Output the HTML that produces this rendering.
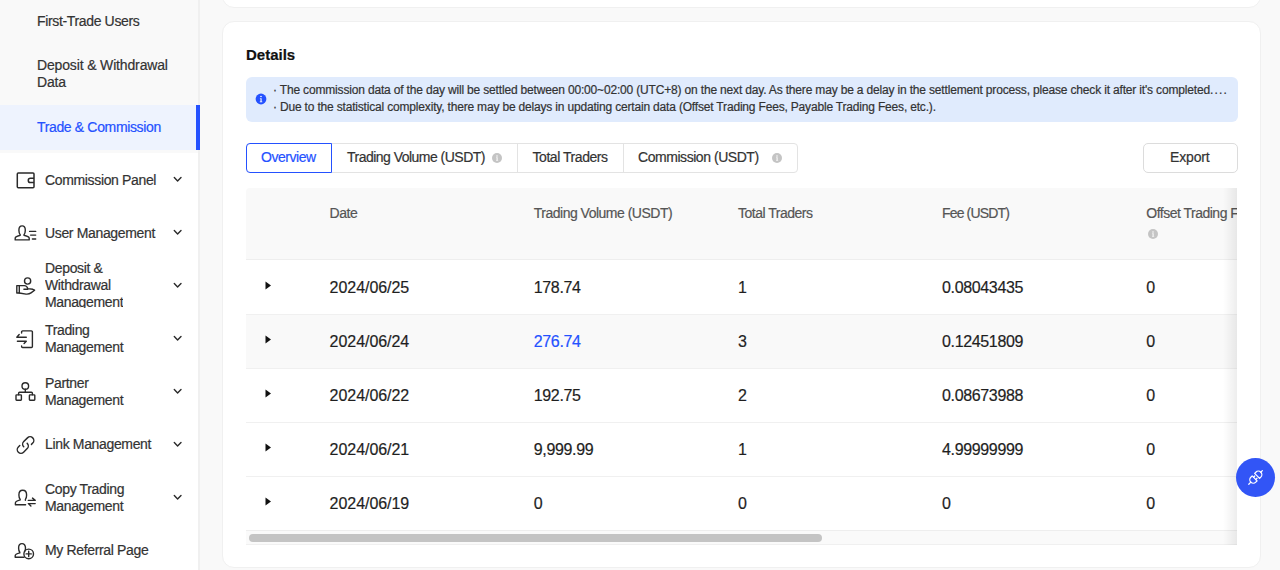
<!DOCTYPE html>
<html><head><meta charset="utf-8">
<style>
*{box-sizing:border-box;margin:0;padding:0}
html,body{width:1280px;height:570px;overflow:hidden;background:#f9f9f9;font-family:"Liberation Sans",sans-serif;color:#1f1f1f}
.abs{position:absolute}
.sb{position:absolute;left:0;top:0;width:200px;height:570px;background:#fff;border-right:2px solid #f0f0f0}
.sub{position:absolute;left:0;top:0;width:198px;height:153px;background:#f9f9f9}
.active{position:absolute;left:0;top:105px;width:196px;height:45px;background:#eef3fe}
.bar{position:absolute;left:196.2px;top:105px;width:3.6px;height:45px;background:#2451ff}
.st{position:absolute;left:37px;font-size:14px;line-height:17px;color:#333;letter-spacing:-0.35px;white-space:nowrap}
.mt{position:absolute;left:45px;font-size:14px;line-height:17px;color:#333;letter-spacing:-0.35px;white-space:nowrap}
.ico{position:absolute;left:10px;width:30px;height:30px}
.chev{position:absolute;left:168px;width:20px;height:20px}
.card{position:absolute;background:#fff;border:1px solid #f0f0f0;border-radius:12px}
.th{position:absolute;font-size:14px;line-height:17px;color:#555;letter-spacing:-0.5px;white-space:nowrap}
.td{position:absolute;font-size:16px;line-height:20px;color:#1f1f1f;letter-spacing:-0.35px;white-space:nowrap}
.tab{position:absolute;top:143px;height:30px;font-size:14px;line-height:28px;color:#333;letter-spacing:-0.45px;white-space:nowrap}
.info{display:inline-block;width:10px;height:10px}
body div{-webkit-text-stroke:0.2px currentColor}</style></head><body>

<!-- sidebar -->
<div class="sb">
  <div class="sub"></div>
  <div class="active"></div>
  <div class="bar"></div>
  <div class="st" style="top:12.6px">First-Trade Users</div>
  <div class="st" style="top:56.8px;letter-spacing:-0.15px">Deposit &amp; Withdrawal<br>Data</div>
  <div class="st" style="top:118.5px;color:#2451ff">Trade &amp; Commission</div>

  <div class="mt" style="top:171.6px">Commission Panel</div>
  <div class="mt" style="top:224.7px">User Management</div>
  <div class="mt" style="top:260.1px;height:48px;overflow:hidden">Deposit &amp;<br>Withdrawal<br>Management</div>
  <div class="mt" style="top:321.5px">Trading<br>Management</div>
  <div class="mt" style="top:374.5px">Partner<br>Management</div>
  <div class="mt" style="top:436.3px">Link Management</div>
  <div class="mt" style="top:480.9px">Copy Trading<br>Management</div>
  <div class="mt" style="top:541.9px">My Referral Page</div>

  <!-- icons -->
  <svg class="ico" style="top:165px" viewBox="0 0 30 30" fill="none" stroke="#2a2a2a" stroke-width="1.5" stroke-linejoin="round">
    <rect x="7.3" y="8.1" width="16.7" height="14.6" rx="1"/>
    <path d="M24 13.3H20.4A2.1 2.1 0 0 0 20.4 17.5H24"/>
  </svg>
  <svg class="ico" style="top:218px" viewBox="0 0 30 30" fill="none" stroke="#2a2a2a" stroke-width="1.4" stroke-linejoin="round" stroke-linecap="round">
    <path d="M10.2 16.6C9.3 15.6 8.9 14.2 8.9 12.3C8.9 9.5 10.2 7.9 12.1 7.9C14 7.9 15.3 9.5 15.3 12.3C15.3 14.2 14.9 15.6 14 16.6L14 17.3C16.5 17.9 19.2 18.3 19.2 20.2L19.2 21.9L5.2 21.9L5.2 20.2C5.2 18.3 7.7 17.9 10.2 17.3Z"/>
    <path d="M19.6 13.4H25.7M20.6 17.1H25.7M22.4 21H25.7"/>
  </svg>
  <svg class="ico" style="top:270px" viewBox="0 0 30 30" fill="none" stroke="#2a2a2a" stroke-width="1.4" stroke-linejoin="round" stroke-linecap="round">
    <circle cx="17.6" cy="11" r="3.1"/>
    <rect x="6.8" y="15.6" width="2.5" height="7.4"/>
    <path d="M9.3 15.6H14.3C15.9 15.6 17.3 16.8 17.8 18.6L22.8 19.3L24.6 20.2L21 22.9C19.8 23.8 18 24.3 16 24.1L9.3 23M13.9 19.3H17.8"/>
  </svg>
  <svg class="ico" style="top:323px" viewBox="0 0 30 30" fill="none" stroke="#2a2a2a" stroke-width="1.4" stroke-linejoin="round" stroke-linecap="round">
    <path d="M11.6 10V8.9A1 1 0 0 1 12.6 7.9H21.4A1 1 0 0 1 22.4 8.9V23.5A1 1 0 0 1 21.4 24.5H12.6A1 1 0 0 1 11.6 23.5V22.9"/>
    <path d="M16.3 14.2H6.8L9.2 11.5M7.4 18.3H16.3L14.1 20.6"/>
  </svg>
  <svg class="ico" style="top:376px" viewBox="0 0 30 30" fill="none" stroke="#2a2a2a" stroke-width="1.4" stroke-linejoin="round" stroke-linecap="round">
    <circle cx="15.3" cy="10" r="3.3"/>
    <path d="M15.3 13.3V16.3M8.6 18.8V17.3A1 1 0 0 1 9.6 16.3H21.4A1 1 0 0 1 22.4 17.3V18.8"/>
    <rect x="6" y="18.9" width="5.4" height="5.3" rx="0.6"/>
    <rect x="19.4" y="18.9" width="5.4" height="5.3" rx="0.6"/>
  </svg>
  <svg class="ico" style="top:430px" viewBox="0 0 30 30" fill="none" stroke="#2a2a2a" stroke-width="1.45" stroke-linecap="round">
    <g transform="rotate(-45 15.5 15.5)">
      <path d="M20.5 18.9H22.3A3.7 3.7 0 0 0 22.3 11.5H17A3.7 3.7 0 0 0 13.3 15.2"/>
      <path d="M11.4 11.5H9.4A3.7 3.7 0 0 0 9.4 18.9H14.5A3.7 3.7 0 0 0 18.2 15.2"/>
    </g>
  </svg>
  <svg class="ico" style="top:482px" viewBox="0 0 30 30" fill="none" stroke="#2a2a2a" stroke-width="1.4" stroke-linejoin="round" stroke-linecap="round">
    <path d="M15.4 18.2V17.4C16.3 16.4 16.6 14.8 16.6 13C16.6 10 15 8.3 12.7 8.3C10.4 8.3 8.9 10 8.9 13C8.9 14.8 9.3 16.4 10.2 17.4V17.9C7.6 18.6 5.4 19 5.4 20.9V22.7H15.6"/>
    <path d="M18.3 18.4H25.2L22.5 16.1M25.2 21.6H18.3L20.9 24"/>
  </svg>
  <svg class="ico" style="top:536px" viewBox="0 0 30 30" fill="none" stroke="#2a2a2a" stroke-width="1.4" stroke-linejoin="round" stroke-linecap="round">
    <path d="M14.6 15.8C15.3 14.8 15.5 13.6 15.5 12C15.5 9 14 7.6 12 7.6C10 7.6 8.6 9 8.6 12C8.6 13.8 9 15.2 9.8 16.2V16.9C7.3 17.5 5.2 18 5.2 19.8V21.2H14"/>
    <circle cx="18.7" cy="17.9" r="4.8"/>
    <path d="M18.7 15.3V20.5M16.1 17.9H21.3"/>
  </svg>
<svg class="chev" style="top:170px" viewBox="0 0 20 20" fill="none" stroke="#2a2a2a" stroke-width="1.4" stroke-linecap="round" stroke-linejoin="round"><path d="M6.3 7.5L9.6 10.9L13 7.5"/></svg>
<svg class="chev" style="top:223px" viewBox="0 0 20 20" fill="none" stroke="#2a2a2a" stroke-width="1.4" stroke-linecap="round" stroke-linejoin="round"><path d="M6.3 7.5L9.6 10.9L13 7.5"/></svg>
<svg class="chev" style="top:276px" viewBox="0 0 20 20" fill="none" stroke="#2a2a2a" stroke-width="1.4" stroke-linecap="round" stroke-linejoin="round"><path d="M6.3 7.5L9.6 10.9L13 7.5"/></svg>
<svg class="chev" style="top:329px" viewBox="0 0 20 20" fill="none" stroke="#2a2a2a" stroke-width="1.4" stroke-linecap="round" stroke-linejoin="round"><path d="M6.3 7.5L9.6 10.9L13 7.5"/></svg>
<svg class="chev" style="top:382px" viewBox="0 0 20 20" fill="none" stroke="#2a2a2a" stroke-width="1.4" stroke-linecap="round" stroke-linejoin="round"><path d="M6.3 7.5L9.6 10.9L13 7.5"/></svg>
<svg class="chev" style="top:435px" viewBox="0 0 20 20" fill="none" stroke="#2a2a2a" stroke-width="1.4" stroke-linecap="round" stroke-linejoin="round"><path d="M6.3 7.5L9.6 10.9L13 7.5"/></svg>
<svg class="chev" style="top:488px" viewBox="0 0 20 20" fill="none" stroke="#2a2a2a" stroke-width="1.4" stroke-linecap="round" stroke-linejoin="round"><path d="M6.3 7.5L9.6 10.9L13 7.5"/></svg>
</div>

<!-- cards -->
<div class="card" style="left:222px;top:-30px;width:1039px;height:38px"></div>
<div class="card" style="left:222px;top:21px;width:1039px;height:547px"></div>

<div class="abs" style="left:246px;top:45px;font-size:15px;line-height:20px;font-weight:bold;color:#111">Details</div>


<!-- banner -->
<div class="abs" style="left:246px;top:77px;width:992px;height:45px;background:#e0ebfd;border-radius:6px"></div>
<svg class="abs" style="left:255px;top:93px" width="12" height="12" viewBox="0 0 12 12">
  <circle cx="6" cy="6" r="5.4" fill="#2451ff"/>
  <circle cx="6" cy="3.5" r="0.8" fill="#fff"/>
  <path d="M4.9 5.2H6.6V8.6H7.3V9.2H4.8V8.6H5.5V5.8H4.9Z" fill="#fff"/>
</svg>
<div class="abs" style="left:273px;top:82.4px;font-size:12px;line-height:17px;color:#333;letter-spacing:-0.17px;white-space:nowrap">· The commission data of the day will be settled between 00:00~02:00 (UTC+8) on the next day. As there may be a delay in the settlement process, please check it after it's completed<span style="letter-spacing:1.2px">....</span></div>
<div class="abs" style="left:273px;top:99.4px;font-size:12px;line-height:17px;color:#333;letter-spacing:-0.18px;white-space:nowrap">· Due to the statistical complexity, there may be delays in updating certain data (Offset Trading Fees, Payable Trading Fees, etc.).</div>

<!-- tabs -->
<div class="abs" style="left:246px;top:143px;width:552px;height:30px;border:1px solid #e3e3e3;border-radius:4px"></div>
<div class="abs" style="left:517px;top:143px;width:1px;height:30px;background:#e3e3e3"></div>
<div class="abs" style="left:623px;top:143px;width:1px;height:30px;background:#e3e3e3"></div>
<div class="abs" style="left:246px;top:143px;width:86px;height:30px;border:1px solid #2451ff;border-radius:4px 0 0 4px;background:#fff"></div>
<div class="tab" style="left:261px;color:#2451ff">Overview</div>
<div class="tab" style="left:347px;letter-spacing:-0.52px">Trading Volume (USDT)</div>
<div class="tab" style="left:532.5px">Total Traders</div>
<div class="tab" style="left:638px">Commission (USDT)</div>
<svg class="abs" style="left:492px;top:152.5px" width="10" height="10" viewBox="0 0 10 10"><circle cx="5" cy="5" r="5" fill="#c4c4c4"/><circle cx="5" cy="2.9" r="0.75" fill="#fff"/><path d="M4.1 4.3H5.6V7.2H6.2V7.7H4V7.2H4.6V4.8H4.1Z" fill="#fff"/></svg>
<svg class="abs" style="left:772px;top:152.5px" width="10" height="10" viewBox="0 0 10 10"><circle cx="5" cy="5" r="5" fill="#c4c4c4"/><circle cx="5" cy="2.9" r="0.75" fill="#fff"/><path d="M4.1 4.3H5.6V7.2H6.2V7.7H4V7.2H4.6V4.8H4.1Z" fill="#fff"/></svg>

<!-- export -->
<div class="abs" style="left:1143px;top:143px;width:95px;height:30px;border:1px solid #dcdcdc;border-radius:5px"></div>
<div class="tab" style="left:1170px;letter-spacing:-0.15px">Export</div>

<!-- table -->
<div class="abs" style="left:246px;top:188px;width:991px;height:357px;overflow:hidden">
  <div class="abs" style="left:0;top:0;width:1100px;height:72px;background:#f9f9f9;border-radius:4px 0 0 0;border-bottom:1px solid #eeeeee"></div>
  <div class="abs" style="left:0;top:126px;width:1100px;height:54px;background:#f9f9f9"></div>
  <div class="abs" style="left:0;top:126px;width:1100px;height:1px;background:#f0f0f0"></div>
  <div class="abs" style="left:0;top:180px;width:1100px;height:1px;background:#f0f0f0"></div>
  <div class="abs" style="left:0;top:234px;width:1100px;height:1px;background:#f0f0f0"></div>
  <div class="abs" style="left:0;top:288px;width:1100px;height:1px;background:#f0f0f0"></div>
  <div class="abs" style="left:0;top:342px;width:1100px;height:1px;background:#eeeeee"></div>
  <div class="abs" style="left:0;top:356px;width:1100px;height:1px;background:#f0f0f0"></div>
  <div class="abs" style="left:0;top:343px;width:1100px;height:13px;background:#fafafa"></div>
  <div class="abs" style="left:2.5px;top:346px;width:573px;height:7.5px;background:#c4c4c4;border-radius:4px"></div>
  <div class="th" style="left:83.6px;top:16.5px">Date</div>
  <div class="th" style="left:287.75px;top:16.5px">Trading Volume (USDT)</div>
  <div class="th" style="left:492px;top:16.5px">Total Traders</div>
  <div class="th" style="left:696px;top:16.5px;letter-spacing:-0.85px">Fee (USDT)</div>
  <div class="th" style="left:900.25px;top:16.5px">Offset Trading Fees (USDT)</div>
  <svg class="abs" style="left:902px;top:41px" width="10" height="10" viewBox="0 0 10 10"><circle cx="5" cy="5" r="5" fill="#c4c4c4"/><circle cx="5" cy="2.9" r="0.75" fill="#fff"/><path d="M4.1 4.3H5.6V7.2H6.2V7.7H4V7.2H4.6V4.8H4.1Z" fill="#fff"/></svg>
  <svg class="abs" style="left:19px;top:92.5px" width="7" height="9" viewBox="0 0 7 9"><path d="M0.5 0.5L6 4.5L0.5 8.5Z" fill="#111"/></svg>
  <div class="td" style="left:83.6px;top:89.5px;letter-spacing:-0.05px">2024/06/25</div>
  <div class="td" style="left:287.75px;top:89.5px">178.74</div>
  <div class="td" style="left:492px;top:89.5px">1</div>
  <div class="td" style="left:696px;top:89.5px">0.08043435</div>
  <div class="td" style="left:900.25px;top:89.5px">0</div>
  <svg class="abs" style="left:19px;top:146.5px" width="7" height="9" viewBox="0 0 7 9"><path d="M0.5 0.5L6 4.5L0.5 8.5Z" fill="#111"/></svg>
  <div class="td" style="left:83.6px;top:143.5px;letter-spacing:-0.05px">2024/06/24</div>
  <div class="td" style="left:287.75px;top:143.5px;color:#2451ff">276.74</div>
  <div class="td" style="left:492px;top:143.5px">3</div>
  <div class="td" style="left:696px;top:143.5px">0.12451809</div>
  <div class="td" style="left:900.25px;top:143.5px">0</div>
  <svg class="abs" style="left:19px;top:200.5px" width="7" height="9" viewBox="0 0 7 9"><path d="M0.5 0.5L6 4.5L0.5 8.5Z" fill="#111"/></svg>
  <div class="td" style="left:83.6px;top:197.5px;letter-spacing:-0.05px">2024/06/22</div>
  <div class="td" style="left:287.75px;top:197.5px">192.75</div>
  <div class="td" style="left:492px;top:197.5px">2</div>
  <div class="td" style="left:696px;top:197.5px">0.08673988</div>
  <div class="td" style="left:900.25px;top:197.5px">0</div>
  <svg class="abs" style="left:19px;top:254.5px" width="7" height="9" viewBox="0 0 7 9"><path d="M0.5 0.5L6 4.5L0.5 8.5Z" fill="#111"/></svg>
  <div class="td" style="left:83.6px;top:251.5px;letter-spacing:-0.05px">2024/06/21</div>
  <div class="td" style="left:287.75px;top:251.5px">9,999.99</div>
  <div class="td" style="left:492px;top:251.5px">1</div>
  <div class="td" style="left:696px;top:251.5px">4.99999999</div>
  <div class="td" style="left:900.25px;top:251.5px">0</div>
  <svg class="abs" style="left:19px;top:308.5px" width="7" height="9" viewBox="0 0 7 9"><path d="M0.5 0.5L6 4.5L0.5 8.5Z" fill="#111"/></svg>
  <div class="td" style="left:83.6px;top:305.5px;letter-spacing:-0.05px">2024/06/19</div>
  <div class="td" style="left:287.75px;top:305.5px">0</div>
  <div class="td" style="left:492px;top:305.5px">0</div>
  <div class="td" style="left:696px;top:305.5px">0</div>
  <div class="td" style="left:900.25px;top:305.5px">0</div>
  <div class="abs" style="left:977px;top:0;width:14px;height:357px;background:linear-gradient(to right,rgba(0,0,0,0),rgba(0,0,0,0.07))"></div>
</div>

<!-- float button -->
<div class="abs" style="left:1236px;top:458px;width:39px;height:39px;border-radius:50%;background:#3255f6"></div>
<svg class="abs" style="left:1244.8px;top:466.7px" width="21" height="21" viewBox="0 0 21 21" fill="none" stroke="#fff" stroke-width="1.25" stroke-linecap="round" stroke-linejoin="round">
  <g transform="rotate(-45 10.5 10.5)">
    <path d="M12.8 7H14.5A3.5 3.5 0 0 1 14.5 14H12.8Z"/>
    <path d="M9.3 7H7.4A3.5 3.5 0 0 0 7.4 14H9.3Z"/>
    <path d="M18 10.5H20.2M3.9 10.5H1M9.3 8.9H11M9.3 12.1H11"/>
  </g>
</svg>
</body></html>
